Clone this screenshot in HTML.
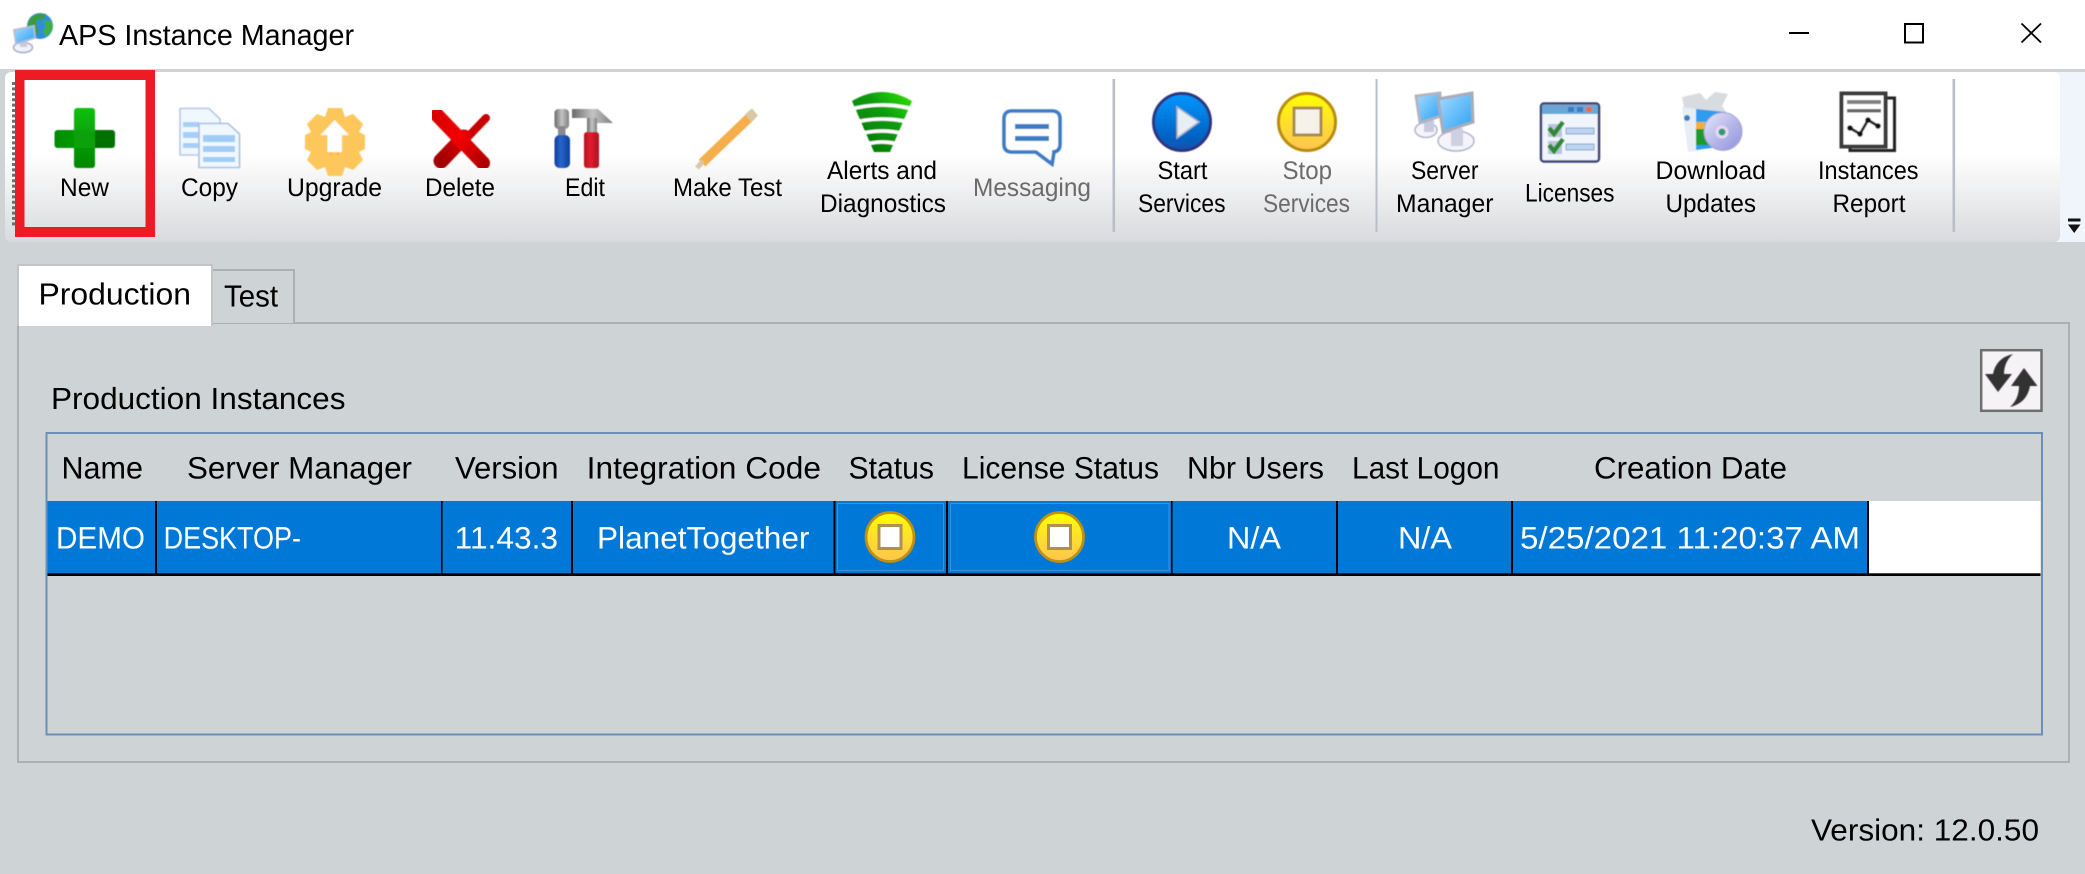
<!DOCTYPE html>
<html><head><meta charset="utf-8"><title>APS Instance Manager</title>
<style>
html,body{margin:0;padding:0;width:2085px;height:874px;overflow:hidden;background:#ced3d5}
svg{display:block}
text{font-family:"Liberation Sans",sans-serif;text-rendering:geometricPrecision}
.t{font-size:25.5px;fill:#000}
.g{font-size:25.5px;fill:#6b6b6b}
.h{font-size:31px;fill:#000}
.c{font-size:31px;fill:#fff}
</style></head><body>
<svg width="2085" height="874" viewBox="0 0 2085 874" xmlns="http://www.w3.org/2000/svg">
<defs>
<linearGradient id="tb" x1="0" y1="0" x2="0" y2="1"><stop offset="0" stop-color="#fff"/><stop offset=".48" stop-color="#fff"/><stop offset="1" stop-color="#d9dadd"/></linearGradient>
<linearGradient id="plusV" x1="0" y1="0" x2="0" y2="1"><stop offset="0" stop-color="#12c012"/><stop offset=".5" stop-color="#04a004"/><stop offset="1" stop-color="#008800"/></linearGradient>
<linearGradient id="plusH" x1="0" y1="0" x2="1" y2="0"><stop offset="0" stop-color="#008c00"/><stop offset=".5" stop-color="#06a006"/><stop offset=".6" stop-color="#006f00"/><stop offset="1" stop-color="#007000"/></linearGradient>
<linearGradient id="xr" x1="0" y1="0" x2="1" y2="1"><stop offset="0" stop-color="#d80000"/><stop offset=".5" stop-color="#f40000"/><stop offset="1" stop-color="#b00000"/></linearGradient>
<linearGradient id="xr2" x1="1" y1="0" x2="0" y2="1"><stop offset="0" stop-color="#e00000"/><stop offset="1" stop-color="#a00000"/></linearGradient>
<linearGradient id="bl" x1="0" y1="0" x2="0" y2="1"><stop offset="0" stop-color="#0098ff"/><stop offset="1" stop-color="#0852b0"/></linearGradient>
<linearGradient id="yl" x1="0" y1="0" x2="0" y2="1"><stop offset="0" stop-color="#ffff00"/><stop offset=".55" stop-color="#ffdd30"/><stop offset="1" stop-color="#ffc450"/></linearGradient>
<linearGradient id="gn" x1="0" y1="1" x2="1" y2="0"><stop offset="0" stop-color="#006f00"/><stop offset=".6" stop-color="#0c9c0c"/><stop offset="1" stop-color="#30e800"/></linearGradient>
<linearGradient id="scr" x1="0" y1="0" x2="1" y2="1"><stop offset="0" stop-color="#a8dcff"/><stop offset="1" stop-color="#28a0f4"/></linearGradient>
<linearGradient id="cd" x1="0" y1="0" x2="1" y2="1"><stop offset="0" stop-color="#e8e8fa"/><stop offset=".5" stop-color="#b8b8ea"/><stop offset="1" stop-color="#8f90dc"/></linearGradient>
<linearGradient id="hd" x1="0" y1="0" x2="1" y2="0"><stop offset="0" stop-color="#6a6a6a"/><stop offset=".5" stop-color="#c4c4c4"/><stop offset="1" stop-color="#808080"/></linearGradient>
<linearGradient id="blu" x1="0" y1="0" x2="1" y2="0"><stop offset="0" stop-color="#0e3f9e"/><stop offset=".4" stop-color="#2a64c8"/><stop offset="1" stop-color="#0e3f9e"/></linearGradient>
<linearGradient id="red" x1="0" y1="0" x2="1" y2="0"><stop offset="0" stop-color="#b01020"/><stop offset=".4" stop-color="#e02030"/><stop offset="1" stop-color="#b01020"/></linearGradient>
<filter id="s" x="-10%" y="-10%" width="120%" height="120%"><feGaussianBlur stdDeviation=".6"/></filter>
<g id="stopI">
<ellipse cx="0" cy="0" rx="24" ry="24.5" fill="url(#yl)" stroke="#c09010" stroke-width="2.800"/>
<rect x="-11" y="-11.500" width="22" height="23" fill="#fff" stroke="#b09050" stroke-width="3"/>
</g>
</defs>

<!-- window -->
<rect width="2085" height="874" fill="#ced3d5"/>
<rect width="2085" height="69" fill="#fff"/>

<!-- app icon -->
<g filter="url(#s)">
<circle cx="40" cy="26" r="13" fill="#2f8fd8"/>
<path d="M30 18Q37 12 46 14L43 20 38 19 36 25 39 31 35 37Q28 32 27 26Z" fill="#3c9a3c"/>
<path d="M43 21L52 21Q55 30 46 37L43 31 46 26Z" fill="#3fae3f"/>
<ellipse cx="23" cy="47.500" rx="9.500" ry="5" fill="#f2f2fa" stroke="#a8a8c8" stroke-width="1.500"/>
<rect x="20" y="40" width="7" height="7" fill="#c8c8dc"/>
<path d="M14 30L34 26 35 38 16 44Z" fill="url(#scr)" stroke="#b4bed4" stroke-width="1.800"/>
</g>
<text x="59" y="45" font-size="29" textLength="295" lengthAdjust="spacingAndGlyphs" fill="#000">APS Instance Manager</text>

<!-- window buttons -->
<rect x="1789" y="32" width="20" height="2" fill="#000"/>
<rect x="1905" y="24" width="18" height="18.500" fill="none" stroke="#000" stroke-width="2"/>
<path d="M2021.500 23.500L2041 42.500M2041 23.500L2021.500 42.500" stroke="#000" stroke-width="1.800" fill="none"/>

<!-- toolbar -->
<rect x="0" y="69" width="2085" height="3" fill="#ced3d5"/>
<rect x="2050" y="72" width="35" height="170" fill="#f0f5fb"/>
<rect x="5" y="72" width="2055" height="170" rx="6" fill="url(#tb)"/>
<path d="M13.500 82V227" stroke="#6e6e6e" stroke-width="3" stroke-dasharray="3 2.400"/>
<rect x="1112.500" y="79" width="2.600" height="153" fill="#b9bfc8"/>
<rect x="1375.500" y="79" width="2" height="153" fill="#b9bfc8"/>
<rect x="1952.500" y="79" width="2.600" height="153" fill="#b9bfc8"/>
<rect x="2068" y="218.500" width="12.500" height="3" fill="#111"/>
<path d="M2068 224.500H2080.500L2074.200 233Z" fill="#111"/>

<!-- New -->
<g filter="url(#s)">
<rect x="54.500" y="130" width="60.500" height="18" rx="3" fill="url(#plusH)"/>
<rect x="74" y="108" width="21" height="60" rx="3" fill="url(#plusV)"/>
<path d="M74 130H86L95 139V148H74Z" fill="#08a008"/>
</g>
<text class="t" x="60" y="196" textLength="49" lengthAdjust="spacingAndGlyphs">New</text>

<!-- Copy -->
<g filter="url(#s)">
<path d="M180 108.500H209L220 119V155H180Z" fill="#f0f8ff" stroke="#b4c8e8" stroke-width="1.600"/>
<path d="M183 122H199V127H183ZM183 132H199V138H183ZM183 143H199V148H183Z" fill="#a5cff8"/>
<path d="M199 123.500H228L239.500 134V167.500H199Z" fill="#f0f8ff" stroke="#aabfe2" stroke-width="1.600"/>
<path d="M203 135H235V142H203ZM203 146H235V152H203ZM203 157H235V162H203Z" fill="#a0ccf8"/>
</g>
<text class="t" x="181" y="196" textLength="57" lengthAdjust="spacingAndGlyphs">Copy</text>

<!-- Upgrade -->
<g filter="url(#s)">
<path d="M328 108h14l3 9 8-3 10 10-4 8 6 3v14l-6 3 4 8-10 10-8-3-3 9h-14l-3-9-8 3-10-10 4-8-6-3v-14l6-3-4-8 10-10 8 3z" fill="#fdc75c"/>
<path d="M334.700 120L349 135H342V152H327.500V135H320.500Z" fill="#fff"/>
<path d="M330 154h2M337 154h2" stroke="#f8b040" stroke-width="2.500"/>
</g>
<text class="t" x="287" y="196" textLength="95" lengthAdjust="spacingAndGlyphs">Upgrade</text>

<!-- Delete -->
<g filter="url(#s)" fill="none" stroke-linecap="round">
<path d="M486 118L464 141" stroke="#c80000" stroke-width="8"/>
<path d="M464 137L441 161" stroke="url(#xr2)" stroke-width="15"/>
<path d="M437 115L483 163" stroke="url(#xr)" stroke-width="14"/>
</g>
<text class="t" x="425" y="196" textLength="70" lengthAdjust="spacingAndGlyphs">Delete</text>

<!-- Edit -->
<g filter="url(#s)">
<rect x="554.500" y="109" width="14.500" height="20" rx="4" fill="url(#hd)"/>
<rect x="558" y="126" width="7.500" height="11" fill="#8a8a8a"/>
<rect x="554.500" y="135" width="15.500" height="33" rx="5" fill="url(#blu)"/>
<path d="M572 109H598L613 123H597L591 118H572Z" fill="url(#hd)"/>
<rect x="587" y="118" width="10" height="15" fill="url(#hd)"/>
<rect x="584" y="132" width="15" height="36" rx="3" fill="url(#red)"/>
</g>
<text class="t" x="565" y="196" textLength="40" lengthAdjust="spacingAndGlyphs">Edit</text>

<!-- Make Test -->
<g filter="url(#s)" fill="none">
<path d="M702 163L752 115" stroke="#f4ae4c" stroke-width="9.500"/>
<path d="M748 118L755 112" stroke="#d8c8a8" stroke-width="9.500"/>
<path d="M697 168L703 161" stroke="#d8c8a8" stroke-width="5"/>
</g>
<text class="t" x="673" y="196" textLength="109" lengthAdjust="spacingAndGlyphs">Make Test</text>

<!-- Alerts -->
<g filter="url(#s)">
<path d="M852 101Q882 83 912 101L890 152H874Z" fill="url(#gn)"/>
<g fill="none" stroke="#fff" stroke-width="3.600">
<path d="M848 110Q882 100 916 110"/>
<path d="M848 124Q882 114 916 124"/>
<path d="M852 136Q882 126 912 136"/>
<path d="M858 147Q882 137 906 147"/>
</g>
</g>
<text class="t" x="827" y="179" textLength="110" lengthAdjust="spacingAndGlyphs">Alerts and</text>
<text class="t" x="820" y="212" textLength="126" lengthAdjust="spacingAndGlyphs">Diagnostics</text>

<!-- Messaging -->
<g filter="url(#s)">
<path d="M1012 111H1052Q1060 111 1060 119V144Q1060 152 1052 152H1054L1052 164 1036 152H1012Q1004 152 1004 144V119Q1004 111 1012 111Z" fill="#fff" stroke="#3a7cc6" stroke-width="3.600"/>
<rect x="1015" y="124" width="34" height="5" fill="#3a7cc6"/>
<rect x="1015" y="136" width="34" height="5" fill="#3a7cc6"/>
</g>
<text class="g" x="973" y="196" textLength="118" lengthAdjust="spacingAndGlyphs">Messaging</text>

<!-- Start -->
<g filter="url(#s)">
<circle cx="1182" cy="122" r="28.500" fill="url(#bl)" stroke="#2a3680" stroke-width="3"/>
<path d="M1177 107L1199 122 1177 138Z" fill="#e8eef6" stroke="#a8b0c0" stroke-width="1.500"/>
</g>
<text class="t" x="1157.500" y="179" textLength="50" lengthAdjust="spacingAndGlyphs">Start</text>
<text class="t" x="1138" y="212" textLength="87.500" lengthAdjust="spacingAndGlyphs">Services</text>

<!-- Stop -->
<g filter="url(#s)">
<circle cx="1307" cy="122" r="28.500" fill="url(#yl)" stroke="#b88a08" stroke-width="3"/>
<rect x="1294" y="108" width="27" height="27" fill="#f5f2ea" stroke="#a88a50" stroke-width="3"/>
</g>
<text class="g" x="1282.500" y="179" textLength="49.500" lengthAdjust="spacingAndGlyphs">Stop</text>
<text class="g" x="1263" y="212" textLength="87" lengthAdjust="spacingAndGlyphs">Services</text>

<!-- Server Manager -->
<g filter="url(#s)">
<ellipse cx="1426" cy="130" rx="11" ry="7.500" fill="#f4f4fa" stroke="#b0b0d0" stroke-width="1.500"/>
<rect x="1424" y="118" width="10" height="14" fill="#c8c8de"/>
<path d="M1416 96L1440 93 1441 116 1420 123Z" fill="url(#scr)" stroke="#b0b4c0" stroke-width="2.800"/>
<ellipse cx="1456" cy="141" rx="18" ry="10" fill="#f4f4fa" stroke="#b0b0d0" stroke-width="1.500"/>
<rect x="1451" y="128" width="12" height="18" fill="#cfcfe2"/>
<path d="M1438 99L1472 93 1473 122 1443 132Z" fill="url(#scr)" stroke="#a8acb8" stroke-width="3"/>
</g>
<text class="t" x="1411" y="179" textLength="67.500" lengthAdjust="spacingAndGlyphs">Server</text>
<text class="t" x="1396" y="212" textLength="97.500" lengthAdjust="spacingAndGlyphs">Manager</text>

<!-- Licenses -->
<g filter="url(#s)">
<rect x="1541" y="103.500" width="58" height="58" rx="3" fill="#f0f5fc" stroke="#3c4274" stroke-width="2.500"/>
<rect x="1542" y="105" width="56" height="9" fill="#68a8d6"/>
<rect x="1568" y="107" width="6" height="5" fill="#3a7cc6"/>
<rect x="1577" y="107" width="6" height="5" fill="#3a7cc6"/>
<rect x="1586" y="107" width="6" height="5" fill="#ee6a40"/>
<rect x="1548" y="124" width="14" height="13" fill="#b8c4e0"/>
<rect x="1548" y="141" width="14" height="13" fill="#b8c4e0"/>
<path d="M1549 128L1554 134 1563 122M1549 145L1554 151 1563 139" fill="none" stroke="#2e8a2e" stroke-width="4.500"/>
<rect x="1566" y="128" width="28" height="6" fill="#bcd6f2" stroke="#8aa4c4"/>
<rect x="1566" y="144" width="28" height="6" fill="#bcd6f2" stroke="#8aa4c4"/>
</g>
<text class="t" x="1525" y="201.700" textLength="89.500" lengthAdjust="spacingAndGlyphs">Licenses</text>

<!-- Download -->
<g filter="url(#s)">
<path d="M1682 97L1700 93 1706 100 1715 92 1728 94 1722 106 1726 112 1684 108Z" fill="#d8dbe0"/>
<path d="M1682 107L1697 109V151L1688 152Z" fill="#e6edf5"/>
<path d="M1696 109L1726 112V146L1696 150Z" fill="#2f9cf0"/>
<rect x="1696" y="122" width="14" height="7" fill="#f2b030"/>
<rect x="1696" y="129" width="14" height="16" fill="#1d9a2a"/>
<circle cx="1687" cy="118" r="3" fill="#3a7cc6"/>
<circle cx="1723" cy="131.500" r="19" fill="url(#cd)" stroke="#a6a6d8"/>
<circle cx="1722" cy="132" r="6.500" fill="#e8d8f0"/>
<circle cx="1722" cy="132" r="3.500" fill="#2e9a7a"/>
</g>
<text class="t" x="1655.500" y="179" textLength="110.500" lengthAdjust="spacingAndGlyphs">Download</text>
<text class="t" x="1665.500" y="212" textLength="90.500" lengthAdjust="spacingAndGlyphs">Updates</text>

<!-- Instances Report -->
<g filter="url(#s)">
<path d="M1887 98H1894.500V150.500H1850V147" fill="none" stroke="#222" stroke-width="3"/>
<rect x="1841.500" y="93.500" width="44" height="53" fill="#fff" stroke="#3a3a3a" stroke-width="4"/>
<rect x="1847" y="100" width="34" height="4" fill="#808080"/>
<rect x="1847" y="109" width="34" height="3.500" fill="#666"/>
<path d="M1850 128L1860 134 1868 120 1878 126" fill="none" stroke="#222" stroke-width="2.800"/>
<circle cx="1850" cy="128" r="2.800" fill="#111"/>
<circle cx="1860" cy="134" r="2.800" fill="#111"/>
<circle cx="1868" cy="120" r="2.800" fill="#111"/>
<circle cx="1878" cy="126" r="2.800" fill="#111"/>
</g>
<text class="t" x="1818" y="179" textLength="100.500" lengthAdjust="spacingAndGlyphs">Instances</text>
<text class="t" x="1832.500" y="212" textLength="73" lengthAdjust="spacingAndGlyphs">Report</text>

<!-- red highlight -->
<path fill-rule="evenodd" d="M15 70H155V237H15ZM24.500 80V227H145.500V80Z" fill="#ed1c24"/>

<!-- panel & tabs -->
<rect x="18" y="323" width="2051" height="439" fill="none" stroke="#adb0b1" stroke-width="2"/>
<path d="M212 323V270H294V323" fill="#ced3d5" stroke="#adb0b1" stroke-width="2"/>
<rect x="18" y="265" width="194" height="60" fill="#fff" stroke="#c2c5c7" stroke-width="2"/>
<rect x="19" y="320" width="192" height="6" fill="#fff"/>
<text x="38.500" y="304.300" font-size="30.500" textLength="152.500" lengthAdjust="spacingAndGlyphs" fill="#000">Production</text>
<text x="224" y="306.700" font-size="30.500" textLength="54" lengthAdjust="spacingAndGlyphs" fill="#000">Test</text>
<text x="51" y="409" font-size="30.500" textLength="294.500" lengthAdjust="spacingAndGlyphs" fill="#000">Production Instances</text>

<!-- refresh -->
<rect x="1981.200" y="350.200" width="60.300" height="60.600" fill="#f6f3f6" stroke="#6f6f6f" stroke-width="2.500"/>
<g fill="#333" filter="url(#s)">
<path d="M2013 354Q1996 358 1993 374H1985L1998 392 2012 374H2004Q2004 362 2013 354Z"/>
<path d="M2010 407Q2027 403 2030 386H2037.500L2024 368 2011 386H2019Q2019 399 2010 407Z"/>
</g>

<!-- table -->
<rect x="46.500" y="433" width="1995.500" height="301.500" fill="#ced3d5" stroke="#6b90b6" stroke-width="2"/>
<text class="h" x="61.500" y="478.300" textLength="81.500" lengthAdjust="spacingAndGlyphs">Name</text>
<text class="h" x="187" y="478.300" textLength="225" lengthAdjust="spacingAndGlyphs">Server Manager</text>
<text class="h" x="455" y="478.300" textLength="103.500" lengthAdjust="spacingAndGlyphs">Version</text>
<text class="h" x="586.700" y="478.300" textLength="234.300" lengthAdjust="spacingAndGlyphs">Integration Code</text>
<text class="h" x="848.500" y="478.300" textLength="85.500" lengthAdjust="spacingAndGlyphs">Status</text>
<text class="h" x="962" y="478.300" textLength="197" lengthAdjust="spacingAndGlyphs">License Status</text>
<text class="h" x="1187" y="478.300" textLength="137" lengthAdjust="spacingAndGlyphs">Nbr Users</text>
<text class="h" x="1352" y="478.300" textLength="147.500" lengthAdjust="spacingAndGlyphs">Last Logon</text>
<text class="h" x="1594" y="478.300" textLength="193" lengthAdjust="spacingAndGlyphs">Creation Date</text>

<rect x="47.500" y="501" width="1993" height="72.500" fill="#fff"/>
<rect x="47.500" y="501" width="1820" height="72.500" fill="#0078d7"/>
<rect x="47.500" y="573.300" width="1993" height="2.700" fill="#000"/>
<g fill="#000">
<rect x="155" y="501" width="2" height="73"/><rect x="441" y="501" width="1.600" height="73"/><rect x="571" y="501" width="2" height="73"/><rect x="833.500" y="501" width="2" height="73"/><rect x="946" y="501" width="2" height="73"/><rect x="1171" y="501" width="1.600" height="73"/><rect x="1336" y="501" width="2" height="73"/><rect x="1511" y="501" width="2" height="73"/><rect x="1867" y="501" width="2" height="73"/>
</g>
<rect x="837.500" y="503.500" width="106" height="67" fill="none" stroke="#3b93e0" stroke-width="1"/>
<rect x="950.500" y="503.500" width="218.500" height="67" fill="none" stroke="#3b93e0" stroke-width="1"/>
<text class="c" x="56" y="548.300" textLength="89" lengthAdjust="spacingAndGlyphs">DEMO</text>
<text class="c" x="163.600" y="548.300" textLength="137.400" lengthAdjust="spacingAndGlyphs">DESKTOP-</text>
<text class="c" x="454.700" y="548.300" textLength="103.300" lengthAdjust="spacingAndGlyphs">11.43.3</text>
<text class="c" x="597" y="548.300" textLength="212.400" lengthAdjust="spacingAndGlyphs">PlanetTogether</text>
<use href="#stopI" transform="translate(890,537)"/>
<use href="#stopI" transform="translate(1059.500,537)"/>
<text class="c" x="1227" y="548.300" textLength="54" lengthAdjust="spacingAndGlyphs">N/A</text>
<text class="c" x="1398" y="548.300" textLength="54" lengthAdjust="spacingAndGlyphs">N/A</text>
<text class="c" x="1520" y="548.300" textLength="340" lengthAdjust="spacingAndGlyphs">5/25/2021 11:20:37 AM</text>

<text x="1811" y="840.700" font-size="30.500" textLength="228" lengthAdjust="spacingAndGlyphs" fill="#000">Version: 12.0.50</text>
</svg>
</body></html>
